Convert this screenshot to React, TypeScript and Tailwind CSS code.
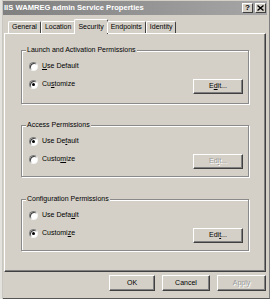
import React from "react";

type Group = {
  title: string;
  defaultLabel: [string, string, string];
  customLabel: [string, string, string];
  editLabel: [string, string, string];
  custom: boolean;
  editEnabled: boolean;
  height: string;
  top: string;
};

const groups: Group[] = [
  {
    title: "Launch and Activation Permissions",
    defaultLabel: ["", "U", "se Default"],
    customLabel: ["Cu", "s", "tomize"],
    editLabel: ["E", "d", "it..."],
    custom: true,
    editEnabled: true,
    height: "h-[54px]",
    top: "mt-[16px]",
  },
  {
    title: "Access Permissions",
    defaultLabel: ["Use De", "f", "ault"],
    customLabel: ["Custo", "m", "ize"],
    editLabel: ["Ed", "i", "t..."],
    custom: false,
    editEnabled: false,
    height: "h-[52px]",
    top: "mt-[21px]",
  },
  {
    title: "Configuration Permissions",
    defaultLabel: ["Use Defa", "u", "lt"],
    customLabel: ["Customi", "z", "e"],
    editLabel: ["Edi", "t", "..."],
    custom: true,
    editEnabled: true,
    height: "h-[52px]",
    top: "mt-[22px]",
  },
];

const Mnemonic: React.FC<{ parts: [string, string, string] }> = ({ parts }) => (
  <>
    {parts[0]}
    <span className="underline underline-offset-1">{parts[1]}</span>
    {parts[2]}
  </>
);

const Radio: React.FC<{ checked: boolean; label: [string, string, string] }> = ({ checked, label }) => (
  <div className="flex items-center h-[10px] gap-[4px]">
    <div className="w-[9px] h-[9px] rounded-full bg-white border border-t-[#808080] border-l-[#808080] border-r-[#f4f4f4] border-b-[#f4f4f4] shadow-[inset_1px_1px_0_#404040] flex items-center justify-center">
      {checked && <div className="w-[3px] h-[3px] rounded-full bg-black" />}
    </div>
    <span className="text-[7px] leading-[10px] text-black">
      <Mnemonic parts={label} />
    </span>
  </div>
);

const Button: React.FC<{ width: string; height: string; enabled?: boolean; children: React.ReactNode }> = ({
  width,
  height,
  enabled = true,
  children,
}) => (
  <div
    className={`${width} ${height} flex items-center justify-center border border-t-white border-l-white border-r-[#404040] border-b-[#404040] shadow-[inset_-1px_-1px_0_#808080] text-[7px] ${
      enabled ? "text-black" : "text-[#9a9a9a] [text-shadow:1px_1px_0_#fff]"
    }`}
  >
    {children}
  </div>
);

const GroupBox: React.FC<{ g: Group }> = ({ g }) => (
  <div
    className={`relative ${g.top} ${g.height} border border-[#8a8a8a] shadow-[inset_1px_1px_0_#fff,1px_1px_0_#fff] pl-[7px] pr-[5px] pt-[10px]`}
  >
    <span className="absolute -top-[6px] left-[4px] bg-[#d4d0c8] px-[1px] text-[7px] leading-[10px] text-black">
      {g.title}
    </span>
    <Radio checked={!g.custom} label={g.defaultLabel} />
    <div className="flex justify-between items-start mt-[8px]">
      <Radio checked={g.custom} label={g.customLabel} />
      <Button width="w-[50px]" height="h-[15px]" enabled={g.editEnabled}>
        <Mnemonic parts={g.editLabel} />
      </Button>
    </div>
  </div>
);

const tabs = ["General", "Location", "Security", "Endpoints", "Identity"];

export default function App() {
  return (
    <div className="w-[270px] h-[299px] overflow-hidden bg-[#d4d0c8] font-['Liberation_Sans',Arial,sans-serif] flex">
      <div className="w-[3px] h-full bg-[#e4e2dc] border-r border-[#c8c6c0]" />
      <div className="flex-1 flex flex-col pt-[1px] pr-[2px] border-r border-[#808080] border-b border-b-[#555]">
        <div className="h-[14px] flex items-center justify-between pl-[1px] pr-[1px] bg-gradient-to-r from-[#808080] to-[#a6a6a6]">
          <span className="text-white font-bold text-[7.6px] leading-[14px]">IIS WAMREG admin Service Properties</span>
          <div className="flex gap-[2px]">
            <div className="w-[11px] h-[10px] bg-[#d4d0c8] border border-t-white border-l-white border-r-[#404040] border-b-[#404040] flex items-center justify-center text-[8px] font-bold leading-none text-black">
              ?
            </div>
            <div className="w-[11px] h-[10px] bg-[#d4d0c8] border border-t-white border-l-white border-r-[#404040] border-b-[#404040] flex items-center justify-center">
              <svg width="7" height="6" viewBox="0 0 7 6">
                <path d="M0.5 0.5 L6.5 5.5 M6.5 0.5 L0.5 5.5" stroke="#000" strokeWidth="1.4" />
              </svg>
            </div>
          </div>
        </div>

        <div className="flex items-end h-[14px] mt-[4px] ml-[5px] relative z-10">
          {tabs.map((t) => {
            const active = t === "Security";
            return (
              <div
                key={t}
                className={`flex items-center justify-center border-l border-t border-r rounded-t-[2px] border-l-white border-t-white border-r-[#404040] text-[7px] text-black ${
                  active ? "h-[15px] -mb-[1px] bg-[#d4d0c8] px-[3px] -mx-[1px]" : "h-[12px] px-[3px]"
                }`}
              >
                {active ? <span className="pt-[0px]">{t}</span> : t}
              </div>
            );
          })}
        </div>

        <div className="mx-[1px] h-[239px] border border-t-white border-l-white border-r-[#404040] border-b-[#404040] shadow-[inset_-1px_-1px_0_#808080] px-[16px]">
          {groups.map((g) => (
            <GroupBox key={g.title} g={g} />
          ))}
        </div>

        <div className="flex justify-end gap-[7px] mt-[3px] pr-[1px]">
          <Button width="w-[46px]" height="h-[16px]">OK</Button>
          <Button width="w-[48px]" height="h-[16px]">Cancel</Button>
          <Button width="w-[49px]" height="h-[16px]" enabled={false}>
            Apply
          </Button>
        </div>
      </div>
    </div>
  );
}
